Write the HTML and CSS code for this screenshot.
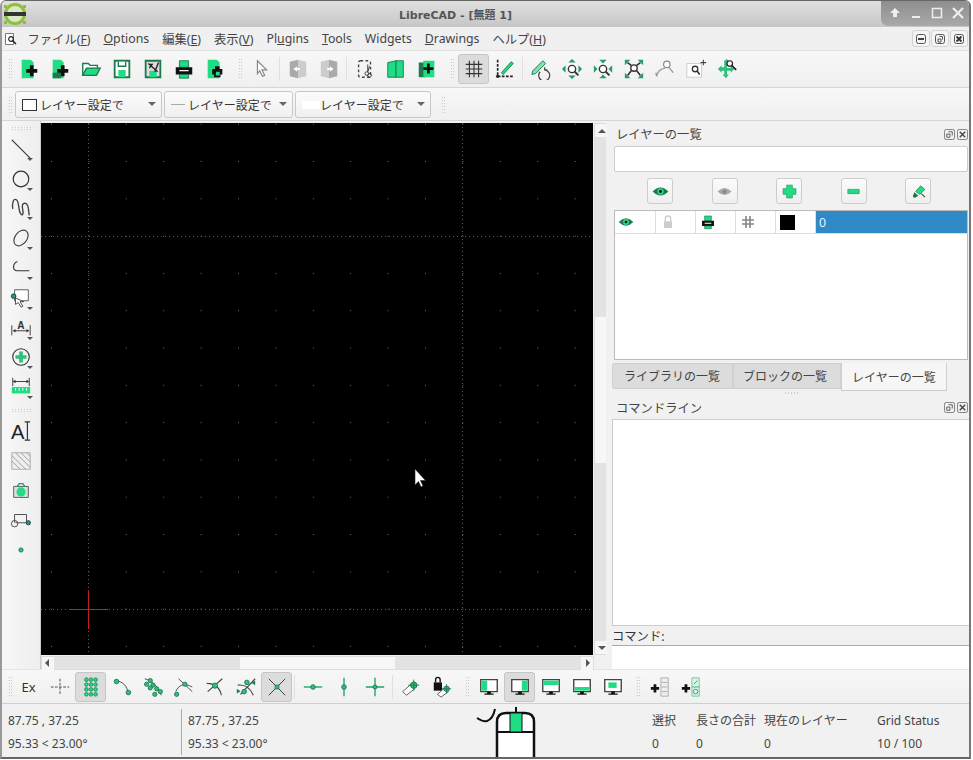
FILE: index.html
```html
<!DOCTYPE html>
<html lang="ja">
<head>
  <meta charset="UTF-8" />
  <title>LibreCAD</title>
  <link rel="stylesheet" href="styles.css">
</head>
<body>
<svg class="sprite" width="0" height="0">
  <symbol id="eye" viewBox="0 0 24 24"><path class="d" d="M1 12q11-11 22 0q-11 11-22 0z"/><circle cx="12" cy="12" r="4.500" fill="#1fdc85"/><circle cx="12" cy="12" r="2" fill="#111"/></symbol>
  <symbol id="printer" viewBox="0 0 24 24"><path class="g" stroke="#1d7a4e" d="M7 3h10v7H7z"/><path class="k" d="M3 10h18v8H3z"/><path fill="#fff" d="M7 13h10v1.500H7z"/><path class="g" stroke="#1d7a4e" d="M7 18h10v4H7z"/></symbol>
  <symbol id="screen" viewBox="0 0 24 24"><path fill="#fff" stroke="#444" stroke-width="1.500" d="M3 4h18v13H3z"/><path class="k" d="M10 17h4v2h3v1.500H7V19h3z"/></symbol>
</svg>

<div class="window">
  <header class="titlebar">
    <svg class="logo" viewBox="0 0 24 24"><circle cx="12" cy="12" r="9.500" fill="#dbe8c4" stroke="#8dbf3a" stroke-width="3"/><path d="M1 10h22v4H1z" fill="#333"/><path d="M1 3h3v3H1zM20 3h3v3h-3zM1 19h3v3H1zM20 19h3v3h-3z" fill="#8dbf3a"/></svg>
    <span class="title">LibreCAD - [無題 1]</span>
    <div class="wm-buttons">
      <svg viewBox="0 0 14 14"><path fill="#eee" d="M7 2l5 5H9v4H5V7H2z"/></svg>
      <svg viewBox="0 0 14 14"><path fill="#eee" d="M3 10h8v2H3z"/></svg>
      <svg viewBox="0 0 14 14"><path fill="none" stroke="#eee" stroke-width="1.500" d="M2.500 2.500h9v9h-9z"/></svg>
      <svg viewBox="0 0 14 14"><path fill="none" stroke="#eee" stroke-width="2.200" d="M2 2l10 10M12 2L2 12"/></svg>
    </div>
  </header>

  <nav class="menubar">
    <svg class="doc-icon" viewBox="0 0 14 14"><path fill="#fff" stroke="#777" d="M1.500 1.500h8v11h-8z"/><circle cx="7" cy="7" r="2.300" fill="#fff" stroke="#222" stroke-width="1.200"/><path stroke="#222" stroke-width="1.500" d="M8.500 8.500l3.500 3.500"/></svg>
    <a>ファイル(<u>F</u>)</a>
    <a><u>O</u>ptions</a>
    <a>編集(<u>E</u>)</a>
    <a>表示(<u>V</u>)</a>
    <a>Pl<u>u</u>gins</a>
    <a><u>T</u>ools</a>
    <a>Widgets</a>
    <a><u>D</u>rawings</a>
    <a>ヘルプ(<u>H</u>)</a>
    <div class="mdi-buttons">
      <span class="mdi"><svg viewBox="0 0 12 12"><rect x="1.500" y="1.500" width="9" height="9" rx="2" fill="none" stroke="#555"/><path d="M3 5h6v2H3z" fill="#444"/></svg></span>
      <span class="mdi"><svg viewBox="0 0 12 12"><rect x="1.500" y="1.500" width="9" height="9" rx="2" fill="none" stroke="#555"/><path d="M4 6h3v3H4zM5.500 3.500h3v3" fill="none" stroke="#555"/></svg></span>
      <span class="mdi"><svg viewBox="0 0 12 12"><rect x="1.500" y="1.500" width="9" height="9" rx="2" fill="none" stroke="#555"/><path d="M3.500 3.500l5 5M8.500 3.500l-5 5" stroke="#333" stroke-width="1.800"/></svg></span>
    </div>
  </nav>

  <div class="toolbar tb-main">
    <i class="handle"></i>
    <button class="tool"><svg viewBox="0 0 24 24"><path class="g" d="M4 2h10l3 3v17H4z"/><path class="k" d="M13 8h4v4h4v4h-4v4h-4v-4H9v-4h4z"/></svg></button>
    <button class="tool"><svg viewBox="0 0 24 24"><path class="g" d="M4 2h9l3 3v17H4z"/><path fill="#1d7a4e" d="M4 16h9v6H4z"/><path class="k" d="M13 8h4v4h4v4h-4v4h-4v-4H9v-4h4z"/></svg></button>
    <button class="tool"><svg viewBox="0 0 24 24"><path fill="#fff" stroke="#1d7a4e" stroke-width="1.500" d="M3 19V6h6l2 2h8v3"/><path class="g" stroke="#1d7a4e" stroke-width="1.500" d="M3 19l4-8h15l-4 8z"/></svg></button>
    <button class="tool"><svg viewBox="0 0 24 24"><path fill="#fff" stroke="#1d7a4e" stroke-width="2" d="M4 3h16v18H4z"/><path class="g" d="M8 13h8v8H8z"/><path stroke="#1d7a4e" stroke-width="1.500" d="M8 4v5h8V4" fill="#fff"/></svg></button>
    <button class="tool"><svg viewBox="0 0 24 24"><path fill="#ddd" stroke="#1d7a4e" stroke-width="2" d="M4 3h16v18H4z"/><path class="g" d="M8 14h8v7H8z"/><path fill="none" stroke="#222" stroke-width="1.500" d="M7 6l10 9M8 11l3-4h-3M18 5l-4 10"/></svg></button>
    <button class="tool"><svg><use href="#printer"/></svg></button>
    <button class="tool"><svg viewBox="0 0 24 24"><path class="g" d="M4 2h10l3 3v17H4z"/><path class="k" d="M12 9h5v3h3v6h-2v3h-7v-3H9v-6h3zM13 15v4h4v-4z"/></svg></button>
    <i class="handle"></i>
    <button class="tool narrow"><svg viewBox="0 0 24 24"><path fill="#fff" stroke="#888" stroke-width="1.300" d="M7 3l10 10h-5l3 6-2.500 1-3-6L7 17z"/></svg></button>
    <i class="sep"></i>
    <button class="tool"><svg viewBox="0 0 24 24"><path fill="#aaa" d="M3 4l9-2v20l-9-2z"/><path fill="#ccc" d="M12 2l9 2v16l-9 2z"/><path fill="#fff" d="M7 12l4-3v2h3v2h-3v2z"/></svg></button>
    <button class="tool"><svg viewBox="0 0 24 24"><path fill="#ccc" d="M3 4l9-2v20l-9-2z"/><path fill="#aaa" d="M12 2l9 2v16l-9 2z"/><path fill="#fff" d="M17 12l-4-3v2h-3v2h3v2z"/></svg></button>
    <i class="sep"></i>
    <button class="tool"><svg viewBox="0 0 24 24"><rect x="5" y="3" width="13" height="18" rx="2" fill="none" stroke="#444" stroke-width="1.500" stroke-dasharray="3 2.500"/><circle cx="14" cy="17" r="2" fill="none" stroke="#333"/><circle cx="17" cy="19" r="2" fill="none" stroke="#333"/><path stroke="#333" d="M15 7l0 8M17 9l-2 6"/></svg></button>
    <button class="tool"><svg viewBox="0 0 24 24"><path class="g" stroke="#1d7a4e" d="M3 5l9-2v18H3z"/><path class="g" stroke="#1d7a4e" d="M12 3h8v18h-8z"/></svg></button>
    <button class="tool"><svg viewBox="0 0 24 24"><path fill="#1d7a4e" d="M3 5h8v16H3z"/><path class="g" d="M8 3h12v18H8z"/><path class="k" d="M12 6h3v4h4v3h-4v4h-3v-4H8v-3h4z"/></svg></button>
    <i class="handle"></i>
    <button class="tool on"><svg viewBox="0 0 24 24"><path stroke="#333" stroke-width="1.200" d="M7 3v18M12 3v18M17 3v18M3 7h18M3 12h18M3 17h18"/></svg></button>
    <button class="tool"><svg viewBox="0 0 24 24"><path stroke="#222" stroke-width="1.800" stroke-dasharray="3 1.500" d="M4 2v17M4 20h18"/><path class="g" stroke="#1d7a4e" d="M8 16l11-12 2 2-11 12z"/><circle cx="4" cy="20" r="1.800" fill="#222"/></svg></button>
    <i class="sep short"></i>
    <button class="tool"><svg viewBox="0 0 24 24"><path fill="#7fe0b0" stroke="#1d7a4e" d="M3 14L14 3l3 3-11 11-4 1z"/><path fill="none" stroke="#444" stroke-width="1.300" d="M11 15a6 6 0 1 0 5-2M16 10l0 3 3 0"/></svg></button>
    <button class="tool"><svg viewBox="0 0 24 24"><circle cx="12" cy="12" r="4" fill="#fff" stroke="#333" stroke-width="1.500"/><path stroke="#333" stroke-width="2" d="M15 15l4 4"/><path fill="#2a9c68" d="M12 1l4 4H8zM12 23l-4-4h8zM1 12l4-4v8zM23 12l-4 4V8z"/></svg></button>
    <button class="tool"><svg viewBox="0 0 24 24"><circle cx="12" cy="12" r="4" fill="#fff" stroke="#333" stroke-width="1.500"/><path stroke="#333" stroke-width="2" d="M15 15l4 4"/><path fill="#2a9c68" d="M12 6L8 2h8zM12 18l4 4H8zM6 12l-4 4V8zM18 12l4-4v8z"/></svg></button>
    <button class="tool"><svg viewBox="0 0 24 24"><circle cx="12" cy="11" r="3.500" fill="#fff" stroke="#333" stroke-width="1.500"/><path stroke="#333" stroke-width="1.800" d="M15 14l4 5M5 5l4 3M19 5l-4 3M5 19l4-5"/><path fill="#2a9c68" d="M2 2h6L2 8zM22 2v6l-6-6zM2 22v-6l6 6zM22 22h-6l6-6z"/></svg></button>
    <button class="tool"><svg viewBox="0 0 24 24"><circle cx="14" cy="7" r="3.500" fill="#fff" stroke="#888" stroke-width="1.300"/><path fill="none" stroke="#999" stroke-width="1.500" d="M3 20a10 10 0 0 1 9-9M16 10l5 6M3 20l-1-4"/></svg></button>
    <button class="tool"><svg viewBox="0 0 24 24"><path fill="#fff" stroke="#ccc" d="M2 6h16v15H2z"/><circle cx="11" cy="12" r="3" fill="#fff" stroke="#333" stroke-width="1.400"/><path stroke="#333" stroke-width="1.800" d="M13 14l3 4"/><path stroke="#444" stroke-width="1.200" d="M20 2v6M17 5h6"/></svg></button>
    <button class="tool"><svg viewBox="0 0 24 24"><path fill="#2fbf7e" d="M9 3l3-2 3 4-3 2v4h4V9l4 3-4 4v-2h-4v4h2l-3 4-4-4h2v-4H6v2l-4-4 4-4v2h3z"/><circle cx="15" cy="6" r="3" fill="#fff" stroke="#222" stroke-width="1.300"/><path stroke="#222" stroke-width="1.800" d="M17 8l5 5"/></svg></button>
  </div>

  <div class="toolbar tb-pens">
    <i class="handle"></i>
    <div class="combo c1"><span class="swatch box"></span><span class="combo-text">レイヤー設定で</span><i class="caret"></i></div>
    <div class="combo c2"><span class="swatch line"></span><span class="combo-text">レイヤー設定で</span><i class="caret"></i></div>
    <div class="combo c3"><span class="swatch blank"></span><span class="combo-text">レイヤー設定で</span><i class="caret"></i></div>
    <i class="handle"></i>
  </div>

  <div class="main">
    <aside class="toolcol">
      <i class="handle-h"></i>
      <button class="side more"><svg viewBox="0 0 24 24"><path stroke="#333" stroke-width="1.200" d="M2 2l20 20"/></svg></button>
      <button class="side more"><svg viewBox="0 0 24 24"><circle cx="12" cy="12" r="8.500" fill="none" stroke="#333" stroke-width="1.300"/></svg></button>
      <button class="side more"><svg viewBox="0 0 24 24"><path fill="none" stroke="#444" stroke-width="1.500" d="M3 13c-1-7 1-12 4-10s2 10 4 14 4 3 3-2-1-9 3-8 3 9 4 13"/></svg></button>
      <button class="side more"><svg viewBox="0 0 24 24"><ellipse cx="12" cy="12" rx="6.500" ry="9.500" transform="rotate(38 12 12)" fill="none" stroke="#444" stroke-width="1.300"/></svg></button>
      <button class="side more"><svg viewBox="0 0 24 24"><path fill="none" stroke="#333" stroke-width="1.200" d="M8 5c-5 2-6 10 0 10h13"/></svg></button>
      <button class="side more"><svg viewBox="0 0 24 24"><path fill="#fff" stroke="#555" d="M5 3h15v12H5z"/><circle cx="4" cy="10" r="2.500" fill="#2a9c68" stroke="#135"/><path fill="#fff" stroke="#444" d="M6 12l9 4h-4l3 5-2 1-3-5-3 2z"/></svg></button>
      <button class="side more"><svg viewBox="0 0 24 24"><text x="12" y="13" class="dim-a">A</text><path stroke="#333" d="M2 9v11M22 9v11M4 15h16"/><path fill="#333" d="M3 15l3-2v4zM21 15l-3-2v4z"/></svg></button>
      <button class="side more"><svg viewBox="0 0 24 24"><circle cx="12" cy="12" r="9" fill="none" stroke="#333" stroke-width="1.200"/><path fill="#2fbf7e" d="M10 6h4v4h4v4h-4v4h-4v-4H6v-4h4z"/></svg></button>
      <button class="side more"><svg viewBox="0 0 24 24"><path stroke="#333" d="M3 2v9M21 2v9M4 6h16"/><path fill="#333" d="M3 6l3-2v4zM21 6l-3-2v4z"/><path class="g" d="M2 12h20v7H2z"/><path stroke="#fff" d="M6 13v3M10 13v3M14 13v3M18 13v3"/></svg></button>
      <i class="handle-h"></i>
      <button class="side"><svg viewBox="0 0 24 24"><text x="1" y="21" class="text-a">A</text><path stroke="#333" stroke-width="1.300" d="M19 2v20M16 2h6M16 22h6"/></svg></button>
      <button class="side"><svg viewBox="0 0 24 24"><rect x="2" y="3" width="20" height="18" fill="#eee" stroke="#aaa"/><path stroke="#999" d="M2 6l15 15M2 12l9 9M6 3l16 16M12 3l10 10M18 3l4 4"/></svg></button>
      <button class="side"><svg viewBox="0 0 24 24"><path fill="#ddd" stroke="#555" d="M4 7h16v12H4z"/><circle cx="12" cy="13" r="5" fill="#1fdc85"/><path fill="none" stroke="#2a9c68" stroke-width="1.500" d="M8 7l2-3h4l2 3"/></svg></button>
      <button class="side"><svg viewBox="0 0 24 24"><path fill="none" stroke="#444" d="M5 15V6h13v9"/><path stroke="#444" d="M6 15h14"/><circle cx="5" cy="16" r="3.500" fill="none" stroke="#444"/><circle cx="20" cy="15" r="2.300" fill="#2a9c68" stroke="#135"/></svg></button>
      <button class="side"><svg viewBox="0 0 24 24"><circle cx="12" cy="12" r="2.300" fill="#2fbf7e" stroke="#1d7a4e"/></svg></button>
    </aside>

    <section class="drawing">
      <div class="viewport">
        <svg class="canvas" viewBox="0 0 552 532">
          <defs>
            <pattern id="dots" x="10" y="38" width="37.400" height="37.300" patternUnits="userSpaceOnUse">
              <rect x="0" y="0" width="1" height="1" fill="#6e6e6e"/>
            </pattern>
          </defs>
          <rect width="552" height="532" fill="#000"/>
          <rect width="552" height="532" fill="url(#dots)"/>
          <path stroke="#5c5c5c" stroke-dasharray="1 3" d="M47.500 0v532M421.500 0v532M0 113.500h552M0 486.500h552"/>
          <path stroke="#c4201f" d="M28 486.500h39M47.500 467v39"/>
          <path fill="#fff" stroke="#222" stroke-width=".6" d="M374 346v16l3.500-3.500 2.500 5.500 2-1-2.500-5.500h5z"/>
        </svg>
        <div class="vscroll">
          <span class="arrow up"></span>
          <div class="v-track"><div class="v-thumb"></div></div>
          <span class="arrow down"></span>
        </div>
      </div>
      <div class="hscroll">
        <span class="arrow left"></span>
        <div class="h-track"><div class="h-thumb"></div></div>
        <span class="arrow right"></span>
      </div>
    </section>

    <section class="docks">
      <div class="dock-head">
        <span>レイヤーの一覧</span>
        <div class="dock-btns">
          <svg viewBox="0 0 12 12"><rect x=".5" y=".5" width="11" height="11" rx="2" fill="none" stroke="#777"/><path d="M3 5.500h3.500v3.500H3zM5 3h4v4" fill="none" stroke="#555"/></svg>
          <svg viewBox="0 0 12 12"><rect x=".5" y=".5" width="11" height="11" rx="2" fill="none" stroke="#777"/><path d="M3 3l6 6M9 3l-6 6" stroke="#444" stroke-width="1.500"/></svg>
        </div>
      </div>
      <div class="filter"></div>
      <div class="layer-btns">
        <button class="lbtn"><svg><use href="#eye"/></svg></button>
        <button class="lbtn"><svg viewBox="0 0 24 24"><path fill="#aaa" d="M2 12q10-10 20 0q-10 10-20 0z"/><circle cx="12" cy="12" r="3" fill="#888"/></svg></button>
        <button class="lbtn"><svg viewBox="0 0 24 24"><path fill="#1fdc85" stroke="#1d9c68" d="M8 3h8v5h5v8h-5v5H8v-5H3V8h5z"/></svg></button>
        <button class="lbtn"><svg viewBox="0 0 24 24"><path fill="#1fdc85" stroke="#1d9c68" d="M4 9h16v6H4z"/></svg></button>
        <button class="lbtn"><svg viewBox="0 0 24 24"><path class="g" stroke="#1d7a4e" d="M8 12l7-8 6 5-7 7z"/><path fill="#1d7a4e" d="M6 13l6 5-6 3-2-2z"/><path stroke="#444" stroke-width="1.500" d="M16 15l5 5"/></svg></button>
      </div>
      <div class="layers">
        <div class="layer-row">
          <span class="cell"><svg><use href="#eye"/></svg></span>
          <span class="cell"><svg viewBox="0 0 24 24"><path fill="#ccc" d="M6 11h12v10H6z"/><path fill="none" stroke="#ccc" stroke-width="2" d="M8 11V7a4 4 0 0 1 8 0v4"/></svg></span>
          <span class="cell"><svg><use href="#printer"/></svg></span>
          <span class="cell"><svg viewBox="0 0 24 24"><path stroke="#888" stroke-width="2.500" d="M9 3v18M15 3v18M3 9h18M3 15h18"/></svg></span>
          <span class="cell"><i class="color-box"></i></span>
          <span class="cell name">0</span>
        </div>
      </div>
      <div class="tabs">
        <span class="tab">ライブラリの一覧</span>
        <span class="tab">ブロックの一覧</span>
        <span class="tab active">レイヤーの一覧</span>
      </div>
      <i class="split"></i>
      <div class="dock-head cmd-head">
        <span>コマンドライン</span>
        <div class="dock-btns">
          <svg viewBox="0 0 12 12"><rect x=".5" y=".5" width="11" height="11" rx="2" fill="none" stroke="#777"/><path d="M3 5.500h3.500v3.500H3zM5 3h4v4" fill="none" stroke="#555"/></svg>
          <svg viewBox="0 0 12 12"><rect x=".5" y=".5" width="11" height="11" rx="2" fill="none" stroke="#777"/><path d="M3 3l6 6M9 3l-6 6" stroke="#444" stroke-width="1.500"/></svg>
        </div>
      </div>
      <div class="history"></div>
      <div class="cmd-label">コマンド:</div>
      <div class="cmd-input"></div>
    </section>
  </div>

  <div class="toolbar tb-snap">
    <i class="handle"></i>
    <button class="tool ex">Ex</button>
    <button class="tool"><svg viewBox="0 0 24 24"><path stroke="#444" stroke-dasharray="3 1.500" d="M12 3v18M2 12h20"/></svg></button>
    <button class="tool on"><svg viewBox="0 0 24 24"><g fill="#1fdc85" stroke="#1d7a4e" stroke-width=".8"><circle cx="7" cy="4" r="2"/><circle cx="12" cy="4" r="2"/><circle cx="17" cy="4" r="2"/><circle cx="7" cy="9.300" r="2"/><circle cx="12" cy="9.300" r="2"/><circle cx="17" cy="9.300" r="2"/><circle cx="7" cy="14.600" r="2"/><circle cx="12" cy="14.600" r="2"/><circle cx="17" cy="14.600" r="2"/><circle cx="7" cy="20" r="2"/><circle cx="12" cy="20" r="2"/><circle cx="17" cy="20" r="2"/></g></svg></button>
    <button class="tool"><svg viewBox="0 0 24 24"><path fill="none" stroke="#444" d="M5 5c8 1 13 6 14 15"/><g class="node"><circle cx="6" cy="6" r="2.500"/><circle cx="19" cy="18" r="2.500"/></g></svg></button>
    <button class="tool"><svg viewBox="0 0 24 24"><path fill="none" stroke="#444" d="M3 3c8 2 16 10 18 18"/><g class="node"><circle cx="5" cy="9" r="2.300"/><circle cx="9" cy="5" r="2.300"/><circle cx="12" cy="10" r="2.300"/><circle cx="9" cy="13" r="2.300"/><circle cx="16" cy="14" r="2.300"/><circle cx="20" cy="17" r="2.300"/><circle cx="14" cy="20" r="2.300"/></g></svg></button>
    <button class="tool"><svg viewBox="0 0 24 24"><path fill="none" stroke="#444" d="M3 17C6 10 12 7 21 12M6 3l15 14"/><g class="node"><circle cx="13" cy="9" r="2.300"/><circle cx="4" cy="20" r="2.300"/></g></svg></button>
    <button class="tool"><svg viewBox="0 0 24 24"><path fill="none" stroke="#444" stroke-width="1.200" d="M3 8c8 0 14 4 16 13M20 3L4 17"/><circle class="node-c" cx="12" cy="10.500" r="2.800"/></svg></button>
    <button class="tool"><svg viewBox="0 0 24 24"><path fill="none" stroke="#444" stroke-width="1.200" d="M3 10c8-1 14 4 17 11M22 3L6 20"/><g class="node"><circle cx="13" cy="7" r="2.500"/><circle cx="10" cy="17" r="2.500"/></g><path fill="#1d7a4e" d="M22 5l-4 2.500L22 10zM2 14l4 2.500L2 19z"/></svg></button>
    <button class="tool on"><svg viewBox="0 0 24 24"><path stroke="#333" d="M3 3l18 18M21 3L3 21"/><rect x="10" y="10" width="4" height="4" fill="#2fbf7e" stroke="#1d7a4e"/></svg></button>
    <i class="sep short"></i>
    <button class="tool"><svg viewBox="0 0 24 24"><path stroke="#1fa46c" stroke-width="1.500" d="M2 12h20"/><circle class="node-c" cx="12" cy="12" r="2.500"/></svg></button>
    <button class="tool"><svg viewBox="0 0 24 24"><path stroke="#1fa46c" stroke-width="1.500" d="M12 2v20"/><circle class="node-c" cx="12" cy="12" r="2.500"/></svg></button>
    <button class="tool"><svg viewBox="0 0 24 24"><path stroke="#1fa46c" stroke-width="1.500" d="M12 2v20M2 12h20"/><circle class="node-c" cx="12" cy="12" r="2.200"/></svg></button>
    <i class="sep short"></i>
    <button class="tool"><svg viewBox="0 0 24 24"><path fill="#fff" stroke="#555" d="M3 17l9-8 4 5-9 7z"/><circle class="node-c" cx="15" cy="10" r="3.500"/><path stroke="#1d7a4e" d="M15 4v12M9 10h12"/></svg></button>
    <button class="tool"><svg viewBox="0 0 24 24"><path class="k" d="M3 7h9v9H3z"/><path fill="none" stroke="#111" stroke-width="1.500" d="M5 7V4a2.500 2.500 0 0 1 5 0v3"/><path fill="#fff" stroke="#555" d="M7 20l8-7 4 4-8 6z"/><circle class="node-c" cx="17" cy="14" r="3"/><path stroke="#1d7a4e" d="M17 9v10M12 14h10"/></svg></button>
    <i class="handle"></i>
    <button class="tool"><svg viewBox="0 0 24 24"><use href="#screen"/><path class="g" d="M4 5h6v11H4z"/></svg></button>
    <button class="tool on"><svg viewBox="0 0 24 24"><use href="#screen"/><path class="g" d="M14 5h6v11h-6z"/></svg></button>
    <button class="tool"><svg viewBox="0 0 24 24"><use href="#screen"/><path class="g" d="M4 5h16v5H4z"/></svg></button>
    <button class="tool"><svg viewBox="0 0 24 24"><use href="#screen"/><path class="g" d="M4 12h16v4H4z"/></svg></button>
    <button class="tool"><svg viewBox="0 0 24 24"><use href="#screen"/><path class="g" d="M7 7h9v6H7z"/></svg></button>
    <i class="handle"></i>
    <button class="tool"><svg viewBox="0 0 24 24"><path class="k" d="M5 9h3v3h3v3H8v3H5v-3H2v-3h3z"/><path fill="#eee" stroke="#aaa" d="M13 2h8v20h-8z"/><path stroke="#aaa" d="M14 7h6M14 12h6M14 17h6"/></svg></button>
    <button class="tool"><svg viewBox="0 0 24 24"><path class="k" d="M5 9h3v3h3v3H8v3H5v-3H2v-3h3z"/><path fill="#d6f5e6" stroke="#6cc79c" d="M13 2h8v10h-8zM13 12h8v10h-8z"/><path stroke="#777" d="M15 9l4-4"/><circle cx="17" cy="17" r="2.500" fill="none" stroke="#777"/></svg></button>
  </div>

  <footer class="status">
    <div class="coords"><span>87.75 , 37.25</span><span>95.33 &lt; 23.00°</span></div>
    <i class="vline"></i>
    <div class="coords rel"><span>87.75 , 37.25</span><span>95.33 &lt; 23.00°</span></div>
    <svg class="mouse" viewBox="0 0 60 52"><path fill="#fff" stroke="#111" stroke-width="2.500" d="M21 52V16q0-9 9-9h19q9 0 9 9v36"/><path stroke="#111" stroke-width="2" d="M21 26h37M40 1v6"/><path fill="#1fdc85" stroke="#111" d="M34 7h12v19H34z"/><path fill="none" stroke="#111" stroke-width="2" d="M1 12q6 4 10 3 6-2 8-12"/></svg>
    <div class="stats">
      <span>選択</span><span>長さの合計</span><span>現在のレイヤー</span><span>Grid Status</span>
      <span>0</span><span>0</span><span>0</span><span>10 / 100</span>
    </div>
  </footer>
</div>
</body>
</html>
```

FILE: styles.css
```css
* {
  box-sizing: border-box;
}

body {
  margin: 0;
  background: #fff;
  font-family: "Noto Sans", "Noto Sans CJK JP", sans-serif;
  font-size: 12.3px;
  color: #444;
}

.sprite {
  position: absolute;
}

.g {
  fill: #1fdc85;
}

.k {
  fill: #111;
}

.d {
  fill: #1d7a4e;
}

.node circle {
  fill: #2fbf7e;
  stroke: #1d7a4e;
}

.node-c {
  fill: #2fbf7e;
  stroke: #1d7a4e;
}

.window {
  width: 971px;
  height: 759px;
  display: flex;
  flex-direction: column;
  background: #f1f1f1;
  border: 1px solid #777;
  border-width: 1px 2px 2px 2px;
  border-color: #666 #777 #666 #999;
  border-radius: 6px 6px 0 0;
  overflow: hidden;
}

/* title bar */
.titlebar {
  height: 26px;
  flex: none;
  position: relative;
  display: flex;
  align-items: center;
  justify-content: center;
  background: linear-gradient(#e0e0e0, #c6c6c6);
}

.logo {
  position: absolute;
  left: 1px;
  top: 1px;
  width: 24px;
  height: 24px;
}

.title {
  font-family: "DejaVu Sans", "Noto Sans CJK JP", sans-serif;
  font-weight: bold;
  font-size: 11px;
  color: #555;
  margin-right: 60px;
}

.wm-buttons {
  position: absolute;
  right: 0;
  top: 0;
  width: 88px;
  height: 25px;
  display: flex;
  align-items: center;
  justify-content: space-around;
  padding: 0 1px 2px 3px;
  background: linear-gradient(#8e8e8e, #a9a9a9);
  border-bottom-left-radius: 7px;
}

.wm-buttons svg {
  width: 14px;
  height: 14px;
}

/* menu */
.menubar {
  height: 24px;
  flex: none;
  display: flex;
  align-items: center;
  padding-left: 2px;
  background: #f0f0f0;
  border-bottom: 1px solid #e2e2e2;
}

.doc-icon {
  width: 14px;
  height: 14px;
  margin-right: 3px;
}

.menubar a {
  padding: 0 6.500px;
  white-space: nowrap;
}

.mdi-buttons {
  margin-left: auto;
  margin-right: 1px;
  display: flex;
  gap: 1px;
}

.mdi {
  width: 18px;
  height: 17px;
  display: flex;
  align-items: center;
  justify-content: center;
  border: 1px solid #d4d4d4;
  border-radius: 3px;
  background: #f4f4f4;
}

.mdi svg {
  width: 12px;
  height: 12px;
}

/* toolbars */
.toolbar {
  flex: none;
  display: flex;
  align-items: center;
  padding-left: 6px;
  background: linear-gradient(#f7f7f7, #f0f0f0);
  border-bottom: 1px solid #d6d6d6;
}

.tb-main {
  height: 37px;
}

.tb-pens {
  height: 33px;
  padding-top: 1px;
}

.tb-snap {
  height: 34px;
  border-top: 1px solid #f6f6f6;
  border-bottom: 1px solid #cfcfcf;
}

.handle {
  width: 5px;
  height: 22px;
  margin: 0;
  flex: none;
  background-image: radial-gradient(#bbb 0.7px, transparent 0.8px);
  background-size: 2.500px 3px;
}

.tool {
  width: 31px;
  height: 30px;
  flex: none;
  padding: 0;
  display: flex;
  align-items: center;
  justify-content: center;
  border: 1px solid transparent;
  border-radius: 3px;
  background: transparent;
  font: inherit;
  color: #333;
}

.tool svg {
  width: 22px;
  height: 22px;
}

.tool.on {
  background: #dcdcdc;
  border-color: #c6c6c6;
}

.tool.ex {
  font-size: 13px;
}

.sep {
  width: 1px;
  height: 24px;
  margin: 0 2px;
  flex: none;
  background: #e0e0e0;
}

.tb-main > .handle:nth-of-type(n+2),
.tb-snap > .handle:nth-of-type(n+2) {
  margin: 0 3px 0 8px;
}

.combo {
  height: 27px;
  display: flex;
  align-items: center;
  margin-right: 2px;
  padding-left: 6px;
  position: relative;
  border: 1px solid #c8c8c8;
  border-radius: 3px;
  background: linear-gradient(#fbfbfb, #f0f0f0);
  color: #333;
  font-size: 12px;
}

.c1 {
  width: 147px;
}

.c2 {
  width: 129px;
}

.c3 {
  width: 136px;
}

.tb-pens .handle {
  height: 18px;
  margin-right: 2px;
}

.tb-pens > .handle:last-child {
  margin: 0 0 0 8px;
}

.swatch {
  flex: none;
  margin-right: 3px;
}

.swatch.box {
  width: 15px;
  height: 12px;
  background: #fff;
  border: 1px solid #333;
}

.swatch.line {
  width: 14px;
  height: 1px;
  margin-right: 3px;
  background: #aaa;
}

.swatch.blank {
  width: 18px;
  height: 8px;
  margin-right: 0;
  background: #fff;
}

.combo-text {
  white-space: nowrap;
}

.caret {
  position: absolute;
  right: 5px;
  top: 10px;
  border: 4px solid transparent;
  border-top: 4px solid #666;
  border-bottom: 0;
}

/* main area */
.main {
  height: 549px;
  flex: none;
  display: flex;
  border-bottom: 1px solid #e4e4e4;
}

.toolcol {
  width: 39px;
  flex: none;
  display: flex;
  flex-direction: column;
  align-items: center;
  background: linear-gradient(90deg, #f7f7f7, #eee);
  border-right: 1px solid #ccc;
}

.handle-h {
  width: 20px;
  height: 5px;
  margin: 6px 0 3px;
  flex: none;
  background-image: radial-gradient(#bbb 0.7px, transparent 0.8px);
  background-size: 3px 2.500px;
}

.handle-h:first-child {
  margin-top: 5px;
}

.side {
  width: 30px;
  height: 29.800px;
  flex: none;
  padding: 0;
  position: relative;
  display: flex;
  align-items: center;
  justify-content: center;
  border: 0;
  background: transparent;
}

.side svg {
  width: 22px;
  height: 22px;
}

.side.more::after {
  content: "";
  position: absolute;
  right: 3px;
  bottom: 3px;
  border: 3px solid transparent;
  border-top: 3px solid #555;
  border-bottom: 0;
}

.dim-a {
  font-family: "Liberation Sans", sans-serif;
  font-size: 11px;
  font-weight: bold;
  text-anchor: middle;
  fill: #333;
}

.text-a {
  font-family: "Liberation Sans", sans-serif;
  font-size: 22px;
  fill: #222;
}

.drawing {
  width: 565px;
  flex: none;
  padding-top: 2px;
  display: flex;
  flex-direction: column;
}

.viewport {
  height: 532px;
  flex: none;
  display: flex;
}

.canvas {
  width: 552px;
  height: 532px;
  flex: none;
  display: block;
}

.vscroll {
  width: 14px;
  margin-left: 1px;
  display: flex;
  flex-direction: column;
  border: 1px solid #ddd;
  background: #e3e3e3;
}

.v-track {
  flex: 1;
  padding-top: 180px;
}

.v-thumb {
  height: 146px;
  background: #f7f7f7;
}

.hscroll {
  height: 14px;
  margin-top: 1px;
  width: 553px;
  display: flex;
  border: 1px solid #ddd;
  background: #e3e3e3;
}

.h-track {
  flex: 1;
  padding-left: 186px;
}

.h-thumb {
  width: 155px;
  height: 100%;
  background: #f7f7f7;
}

.arrow {
  width: 12px;
  height: 13px;
  flex: none;
  position: relative;
  background: #f6f6f6;
}

.arrow::after {
  content: "";
  position: absolute;
  left: 3px;
  top: 4px;
  border: 4px solid transparent;
}

.arrow.up::after {
  top: 1px;
  border-bottom-color: #555;
}

.arrow.down::after {
  top: 5px;
  border-top-color: #555;
}

.arrow.left::after {
  left: -1px;
  top: 2px;
  border-right-color: #555;
}

.arrow.right::after {
  left: 5px;
  top: 2px;
  border-left-color: #555;
}

/* docks */
.docks {
  flex: 1;
  min-width: 0;
  display: flex;
  flex-direction: column;
  padding: 1px 0 0 6px;
  background: #f1f1f1;
}

.dock-head {
  height: 24px;
  flex: none;
  display: flex;
  align-items: center;
  justify-content: space-between;
  padding: 0 1px 0 4px;
  color: #444;
}

.dock-btns {
  display: flex;
  gap: 2px;
}

.dock-btns svg {
  width: 11px;
  height: 11px;
}

.filter {
  width: 354px;
  height: 26px;
  margin: 0 0 0 2px;
  flex: none;
  background: #fff;
  border: 1px solid #ccc;
  border-radius: 2px;
}

.layer-btns {
  height: 38px;
  flex: none;
  display: flex;
  align-items: center;
  gap: 38.500px;
  padding: 0 0 0 35px;
}

.lbtn {
  width: 26px;
  height: 26px;
  flex: none;
  padding: 0;
  display: flex;
  align-items: center;
  justify-content: center;
  border: 1px solid #ccc;
  border-radius: 3px;
  background: linear-gradient(#fbfbfb, #efefef);
}

.lbtn svg {
  width: 17px;
  height: 17px;
}

.layers {
  width: 354px;
  height: 150px;
  margin-left: 2px;
  flex: none;
  background: #fff;
  border: 1px solid #bbb;
}

.layer-row {
  height: 23px;
  display: flex;
  border-bottom: 1px solid #ddd;
}

.cell {
  width: 40px;
  flex: none;
  display: flex;
  align-items: center;
  padding-left: 4px;
  border-right: 1px solid #ddd;
}

.cell:first-child {
  width: 41px;
  padding-left: 3px;
}

.cell svg {
  width: 16px;
  height: 16px;
}

.color-box {
  width: 15px;
  height: 15px;
  background: #000;
}

.cell.name {
  flex: 1;
  border-right: 0;
  padding-left: 3px;
  background: #2f8ac6;
  color: #e8f4ff;
}

.tabs {
  height: 28px;
  margin-top: 3px;
  flex: none;
  display: flex;
  align-items: flex-start;
  font-size: 12px;
}

.tab {
  height: 26px;
  padding: 0 0 0 11px;
  display: flex;
  align-items: center;
  flex: none;
  white-space: nowrap;
  background: #dcdcdc;
  border: 1px solid #d0d0d0;
  color: #444;
}

.tab:first-child {
  width: 121px;
  border-radius: 2px 0 0 2px;
}

.tab:nth-child(2) {
  width: 108px;
  padding-left: 9px;
}

.tab.active {
  width: 106px;
  height: 28px;
  padding-left: 10px;
  background: #f6f6f6;
  border-bottom-color: #ccc;
  border-top: 0;
}

.split {
  height: 2px;
  flex: none;
  margin: 1px auto 0;
  width: 14px;
  background-image: radial-gradient(#aaa 0.7px, transparent 0.8px);
  background-size: 3px 2px;
}

.cmd-head {
  height: 23px;
  margin-top: 2px;
}

.history {
  width: 358px;
  height: 207px;
  flex: none;
  background: #fff;
  border: 1px solid #ccc;
}

.cmd-label {
  height: 20px;
  flex: none;
  display: flex;
  align-items: center;
  border-bottom: 1px solid #aaa;
  color: #333;
}

.cmd-input {
  flex: 1;
  background: #fff;
}

/* status bar */
.status {
  flex: 1;
  display: flex;
  background: #f1f1f1;
  font-size: 12px;
}

.coords {
  width: 179px;
  flex: none;
  padding: 5px 0 0 6px;
  display: flex;
  flex-direction: column;
}

.coords span {
  height: 23px;
  line-height: 23px;
}

.coords.rel {
  width: 294px;
}

.vline {
  width: 1px;
  flex: none;
  margin: 5px 0 3px;
  background: #aaa;
}

.mouse {
  width: 60px;
  height: 52px;
  flex: none;
  margin-top: 2px;
}

.stats {
  margin-left: 116px;
  padding-top: 5px;
  display: grid;
  grid-template-columns: 44px 68px 113px auto;
  grid-auto-rows: 23px;
  line-height: 23px;
  white-space: nowrap;
}
```
